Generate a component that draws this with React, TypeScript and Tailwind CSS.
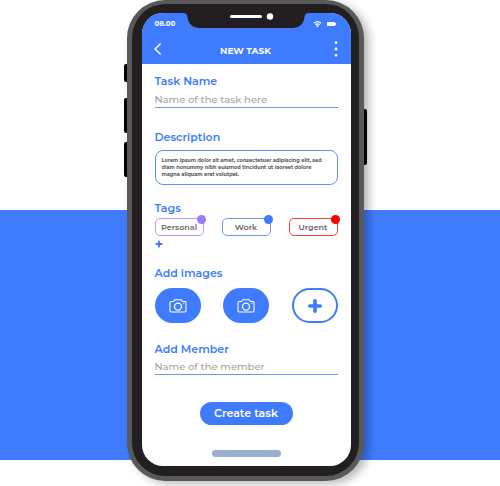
import type { ReactNode } from "react";

const heading = "block text-[11px] leading-[16px] font-semibold text-[#3f7bff]";
const field =
  "block h-[18px] w-full border-b border-[#6b97ff] bg-transparent pt-px text-[10px] leading-[16px] font-medium text-gray-600 outline-none placeholder:text-[#a5a5a5]";

function Plus({ className }: { className: string }) {
  return (
    <svg viewBox="0 0 14 14" className={className} aria-hidden="true">
      <path d="M7 2.4v9.2M2.4 7h9.2" stroke="currentColor" strokeWidth="3.2" strokeLinecap="round" />
    </svg>
  );
}

function Camera() {
  return (
    <svg viewBox="0 0 18 16" className="h-4 w-[18px]" fill="none" stroke="white" aria-hidden="true">
      <path
        d="M2.2 3.5H4.6L5.8 1.7H12.2L13.4 3.5H15.8Q17 3.5 17 4.7V12.8Q17 14 15.8 14H2.2Q1 14 1 12.8V4.7Q1 3.5 2.2 3.5Z"
        strokeWidth="1.1"
        strokeLinejoin="round"
      />
      <circle cx="9" cy="8.6" r="3.5" strokeWidth="1.3" />
      <circle cx="14.8" cy="5.6" r="0.7" fill="white" stroke="none" />
    </svg>
  );
}

function Tag({ children, line, dot }: { children: ReactNode; line: string; dot: string }) {
  return (
    <button
      type="button"
      className={`relative h-[18px] w-[49px] rounded-[5px] border pb-px text-[8px] leading-[14px] font-semibold text-[#666] ${line}`}
    >
      {children}
      <span className={`absolute -top-1 -right-[3px] size-[9px] rounded-full ${dot}`} />
    </button>
  );
}

function StatusBar() {
  return (
    <div className="relative flex h-[22px] items-center justify-between pr-[14px] pl-[13px] text-white">
      <span className="text-[7px] leading-[8px] font-bold">08.00</span>
      <svg viewBox="0 0 24 8" className="h-2 w-6" fill="none" stroke="white" aria-hidden="true">
        <path d="M1 3.2Q4.5 0 8 3.2M2.4 4.7Q4.5 2.9 6.6 4.7" strokeWidth="1.2" />
        <circle cx="4.5" cy="6.1" r="1" fill="white" stroke="none" />
        <rect x="14" y="2" width="8" height="4" rx="0.6" fill="white" stroke="none" />
        <path d="M22.6 3v2" strokeWidth="1" />
      </svg>
      <svg viewBox="0 0 126 17" className="absolute -top-px left-1/2 h-[17px] w-[126px] -translate-x-1/2" aria-hidden="true">
        <path d="M0 0H126V1Q122 1 121.5 5Q120 16 109 16H17Q6 16 4.5 5Q4 1 0 1Z" fill="#231f20" />
        <rect x="47" y="3" width="32" height="3" rx="1.5" fill="white" />
        <circle cx="87" cy="4.5" r="3.2" fill="white" />
      </svg>
    </div>
  );
}

export default function App() {
  return (
    <main className="grid min-h-[486px] grid-cols-1 grid-rows-[210px_250px_1fr] bg-white font-['Montserrat','Inter',sans-serif]">
      <div className="col-start-1 row-start-2 bg-[#3f7bff]" />
      <div className="col-start-1 row-span-3 row-start-1 flex items-start justify-center pr-[13px]">
        <div className="mt-16 -mr-px flex w-1 flex-col items-end">
          <span className="h-[18px] w-1 rounded-l-xs bg-black" />
          <span className="mt-4 h-[35px] w-1 rounded-l-xs bg-black" />
          <span className="mt-[9px] h-[35px] w-1 rounded-l-xs bg-black" />
        </div>
        <div className="w-[237px] rounded-[38px] border-[5px] border-t-4 border-[#58595b] bg-[#231f20] pt-[9px] pr-2 pb-[10px] pl-[10px] shadow-[5px_3px_8px_rgba(0,0,0,0.28)]">
          <div className="overflow-hidden rounded-[21px] bg-white">
            <header className="bg-[#3f7bff] text-white">
              <StatusBar />
              <div className="grid h-[29px] grid-cols-[1fr_auto_1fr] items-center pr-[13px] pb-px pl-3">
                <button type="button" aria-label="Back" className="justify-self-start">
                  <svg viewBox="0 0 8 12" className="h-3 w-2" fill="none" stroke="white" aria-hidden="true">
                    <path d="M6.2 1L1 6L6.2 11" strokeWidth="1.5" strokeLinecap="round" />
                  </svg>
                </button>
                <h1 className="pt-[3px] text-[9px] leading-[12px] font-bold">NEW TASK</h1>
                <button type="button" aria-label="More options" className="justify-self-end">
                  <svg viewBox="0 0 4 16" className="h-4 w-1" fill="white" aria-hidden="true">
                    <circle cx="2" cy="1.7" r="1.4" />
                    <circle cx="2" cy="8" r="1.4" />
                    <circle cx="2" cy="14.3" r="1.4" />
                  </svg>
                </button>
              </div>
            </header>
            <form className="px-[13px] pt-[9px] pb-[9px]" onSubmit={(e) => e.preventDefault()}>
              <label htmlFor="task" className={heading}>Task Name</label>
              <input id="task" placeholder="Name of the task here" className={`mt-px ${field}`} />

              <label htmlFor="description" className={`mt-[21px] ${heading}`}>Description</label>
              <textarea
                id="description"
                className="mt-[5px] block h-[35px] w-full resize-none overflow-hidden rounded-[8px] border border-[#5d8fff] px-[6px] py-[6px] text-[5px] leading-[7px] font-bold whitespace-pre text-[#555] outline-none"
                defaultValue={
                  "Lorem ipsum dolor sit amet, consectetuer adipiscing elit, sed\ndiam nonummy nibh euismod tincidunt ut laoreet dolore\nmagna aliquam erat volutpat."
                }
              />

              <h2 className={`mt-[15px] ${heading}`}>Tags</h2>
              <div className="mt-[2px] flex justify-between">
                <Tag line="border-[#b79cff]" dot="bg-[#9a7bff]">Personal</Tag>
                <Tag line="border-[#6b97ff]" dot="bg-[#3f7bff]">Work</Tag>
                <Tag line="border-[#ff3b3b]" dot="bg-[#ff0000]">Urgent</Tag>
              </div>
              <button type="button" aria-label="Add tag" className="mt-[4px] block text-[#3f7bff]">
                <Plus className="size-2" />
              </button>

              <h2 className={`mt-[17px] ${heading}`}>Add images</h2>
              <div className="mt-[7px] flex justify-between">
                <button type="button" aria-label="Add first image" className="flex h-[35px] w-[46px] items-center justify-center rounded-full bg-[#3f7bff]">
                  <Camera />
                </button>
                <button type="button" aria-label="Add second image" className="flex h-[35px] w-[46px] items-center justify-center rounded-full bg-[#3f7bff]">
                  <Camera />
                </button>
                <button type="button" aria-label="More images" className="flex h-[35px] w-[46px] items-center justify-center rounded-full border-2 border-[#3f7bff] text-[#3f7bff]">
                  <Plus className="size-4" />
                </button>
              </div>

              <label htmlFor="member" className={`mt-[18px] ${heading}`}>Add Member</label>
              <input id="member" placeholder="Name of the member" className={field} />

              <button type="submit" className="mx-auto mt-[27px] block h-[23px] w-[93px] rounded-full bg-[#3f7bff] pb-px text-[11px] leading-[22px] font-semibold text-white">
                Create task
              </button>
              <div className="mx-auto mt-[25px] h-[7px] w-[69px] rounded-full bg-[#9ab0cc]" />
            </form>
          </div>
        </div>
        <span className="mt-[109px] -mr-[3px] h-14 w-[3px] rounded-r-xs bg-black" />
      </div>
    </main>
  );
}
